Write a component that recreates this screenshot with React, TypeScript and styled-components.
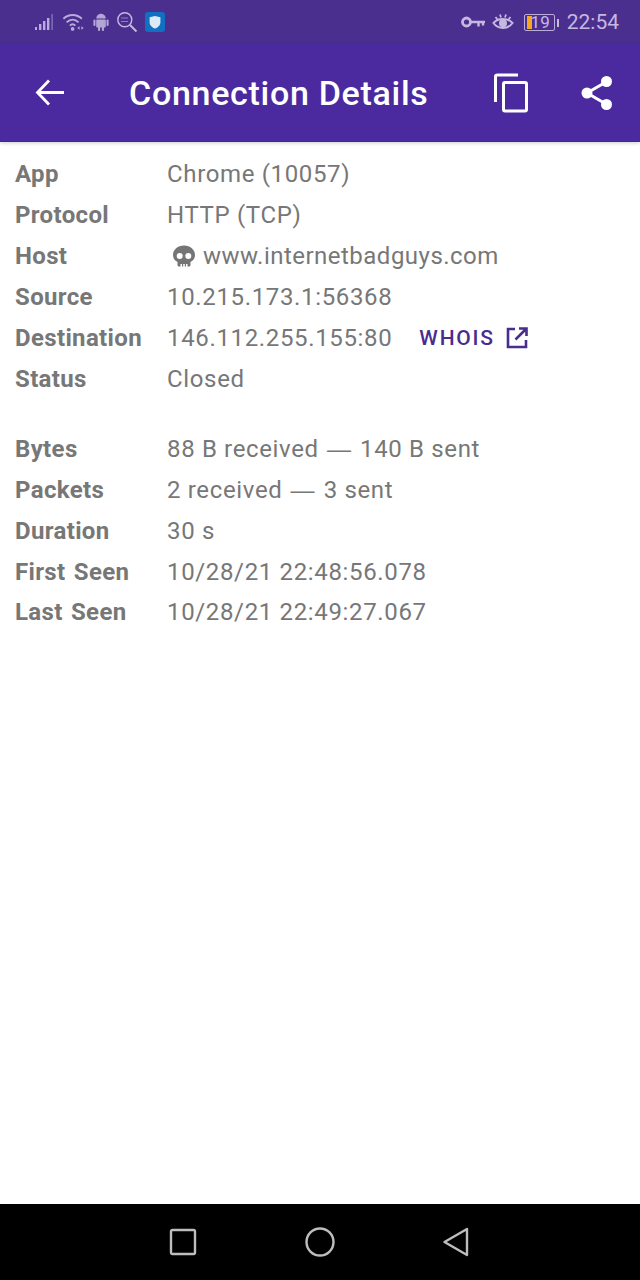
import React from "react";
import styled, { createGlobalStyle } from "styled-components";

const GlobalStyle = createGlobalStyle`
  html, body {
    margin: 0;
    padding: 0;
    background: #fff;
  }
  body {
    font-family: Roboto, "Liberation Sans", sans-serif;
  }
`;

const SignalIcon = () => (
  <svg width="20" height="20" viewBox="0 0 20 20">
    <rect x="0" y="15" width="2" height="3" fill="#b9abdc" />
    <rect x="4" y="12" width="2.4" height="6" fill="#b9abdc" />
    <rect x="8" y="9" width="2.4" height="9" fill="#b9abdc" />
    <rect x="12" y="6" width="2.4" height="12" fill="#b9abdc" />
    <rect x="16.500" y="2" width="1.2" height="16" fill="#8f7cc4" />
  </svg>
);

const WifiIcon = () => (
  <svg width="24" height="22" viewBox="0 0 26 22" fill="none">
    <path d="M1.5 7.5C7 2 16 2 21.5 7.5" stroke="#b9abdc" strokeWidth="2" />
    <path d="M5 11.5C9 7.5 14 7.5 18 11.5" stroke="#b9abdc" strokeWidth="2" />
    <path d="M8.5 15C10.5 13 12.5 13 14.5 15" stroke="#b9abdc" strokeWidth="2" />
    <circle cx="11.5" cy="18.500" r="2" fill="#b9abdc" />
    <path d="M19 15.5v4l-2.5-2zM21 15.5v4l2.5-2z" fill="#b9abdc" />
  </svg>
);

const AndroidIcon = () => (
  <svg width="16" height="20" viewBox="0 0 16 20">
    <path d="M3.2 6.6a4.8 4.8 0 0 1 9.6 0z" fill="#b3a6d6" />
    <rect x="3.2" y="7.4" width="9.6" height="8" rx="1" fill="#b3a6d6" />
    <rect x="0.4" y="7.4" width="2.1" height="6.6" rx="1" fill="#b3a6d6" />
    <rect x="13.5" y="7.4" width="2.1" height="6.6" rx="1" fill="#b3a6d6" />
    <rect x="5" y="14" width="2.1" height="5" rx="1" fill="#b3a6d6" />
    <rect x="8.9" y="14" width="2.1" height="5" rx="1" fill="#b3a6d6" />
  </svg>
);

const SearchIcon = () => (
  <svg width="22" height="22" viewBox="0 0 22 22" fill="none">
    <circle cx="8.8" cy="8.8" r="7" stroke="#c5b9e2" strokeWidth="1.4" />
    <path d="M14 14l6.5 6.5" stroke="#c5b9e2" strokeWidth="2" />
    <path d="M5 7h7M5 10.5h7" stroke="#8f7cc4" strokeWidth="1.2" />
  </svg>
);

const ShieldApp = () => (
  <svg width="20" height="20" viewBox="0 0 20 20">
    <rect width="20" height="20" rx="3" fill="#1270c0" />
    <path d="M4.6 5.2L10 4l5.4 1.2v5.2C15.4 13.4 12.6 15.6 10 16.4 7.4 15.6 4.6 13.4 4.6 10.4z" fill="#dceaf5" />
  </svg>
);

const KeyIcon = () => (
  <svg width="24" height="14" viewBox="0 0 24 14" fill="none">
    <circle cx="5.500" cy="7" r="4" stroke="#c5b9e2" strokeWidth="2.800" />
    <path d="M9 7h15M17.500 7v4.500M22 7v3.500" stroke="#c5b9e2" strokeWidth="2.400" />
  </svg>
);

const EyeIcon = () => (
  <svg width="22" height="20" viewBox="0 0 22 20" fill="none">
    <path d="M1.5 11C6 5.5 16 5.5 20.500 11C16 17.500 6 17.500 1.500 11Z" stroke="#c5b9e2" strokeWidth="2" />
    <circle cx="11" cy="11.300" r="4" fill="#c5b9e2" />
    <path d="M3.500 5l2 2.500M8 2.500l1 3M14 2.500l-1 3M18.500 5l-2 2.500" stroke="#c5b9e2" strokeWidth="1.800" />
  </svg>
);

const BackIcon = () => (
  <svg width="30" height="30" viewBox="0 0 30 30" fill="none">
    <path d="M29 14.500H3M14 2.500L2.500 14.500L14 26.500" stroke="#fff" strokeWidth="2.800" />
  </svg>
);

const CopyIcon = () => (
  <svg width="34" height="40" viewBox="0 0 34 40" fill="none">
    <path d="M24 2H3.500C2.500 2 1.500 2.500 1.500 3.500V29" stroke="#fff" strokeWidth="3" />
    <rect x="9.500" y="9.500" width="23" height="28.500" rx="1.500" stroke="#fff" strokeWidth="3" />
  </svg>
);

const ShareIcon = () => (
  <svg width="34" height="36" viewBox="0 0 34 36">
    <path d="M26 7L7 18l19 11" stroke="#fff" strokeWidth="3" fill="none" />
    <circle cx="26.500" cy="6.500" r="5.500" fill="#fff" />
    <circle cx="7" cy="18" r="5.500" fill="#fff" />
    <circle cx="26.500" cy="29.500" r="5.500" fill="#fff" />
  </svg>
);

const SkullIcon = () => (
  <svg width="24" height="24" viewBox="0 0 24 24">
    <path
      fillRule="evenodd"
      fill="#757575"
      d="M12 1.500C5.800 1.500 1 5.700 1 11c0 3.300 1.700 5.600 4.500 6.900V21c0 .9.600 1.500 1.500 1.500h1.500v-2.500h1.500v2.500h1.200v-2.500h1.600v2.500h1.200v-2.500h1.500v2.500H17c.9 0 1.500-.6 1.500-1.500v-3.100C21.300 16.600 23 14.300 23 11c0-5.300-4.800-9.500-11-9.500zM7.700 9a3 3 0 1 1 0 6 3 3 0 0 1 0-6zm8.600 0a3 3 0 1 1 0 6 3 3 0 0 1 0-6z"
    />
  </svg>
);

const ExternalIcon = () => (
  <svg width="22" height="22" viewBox="0 0 22 22" fill="none">
    <path d="M9 2H2v18h18v-7" stroke="#4a2c8f" strokeWidth="2.600" />
    <path d="M13 1.500h7.500V9M20 2L9.500 12.500" stroke="#4a2c8f" strokeWidth="2.600" />
  </svg>
);

const App: React.FC = () => {
  return (
    <Screen>
      <GlobalStyle />
      <StatusBar>
        <StatusGroup>
          <SignalIcon />
          <WifiIcon />
          <AndroidIcon />
          <SearchIcon />
          <ShieldApp />
        </StatusGroup>
        <StatusGroup>
          <KeyIcon />
          <EyeIcon />
          <Battery>
            <BatteryFill />
            19
          </Battery>
          <Clock>22:54</Clock>
        </StatusGroup>
      </StatusBar>
      <AppBar>
        <BackIcon />
        <Title>Connection Details</Title>
        <Actions>
          <CopyIcon />
          <ShareIcon />
        </Actions>
      </AppBar>
      <Content>
        <Table>
          <Label>App</Label>
          <Value>Chrome (10057)</Value>
          <Label>Protocol</Label>
          <Value>HTTP (TCP)</Value>
          <Label>Host</Label>
          <Value>
            <HostIcon>
              <SkullIcon />
            </HostIcon>
            <HostName>www.internetbadguys.com</HostName>
          </Value>
          <Label>Source</Label>
          <Value>10.215.173.1:56368</Value>
          <Label>Destination</Label>
          <Value>
            146.112.255.155:80
            <Whois>
              WHOIS
              <ExternalIcon />
            </Whois>
          </Value>
          <Label>Status</Label>
          <Value>Closed</Value>
        </Table>
        <Table>
          <Label>Bytes</Label>
          <Value>
            88 B received <Dash>—</Dash> 140 B sent
          </Value>
          <Label>Packets</Label>
          <Value>
            2 received <Dash>—</Dash> 3 sent
          </Value>
          <Label>Duration</Label>
          <Value>30 s</Value>
          <Label>First Seen</Label>
          <Value>10/28/21 22:48:56.078</Value>
          <Label>Last Seen</Label>
          <Value>10/28/21 22:49:27.067</Value>
        </Table>
      </Content>
      <NavBar>
        <svg width="28" height="28" viewBox="0 0 28 28" fill="none">
          <rect x="2" y="2" width="24" height="24" rx="1.500" stroke="#bdbdbd" strokeWidth="2.400" />
        </svg>
        <svg width="30" height="30" viewBox="0 0 30 30" fill="none">
          <circle cx="15" cy="15" r="13.500" stroke="#bdbdbd" strokeWidth="2.400" />
        </svg>
        <svg width="28" height="30" viewBox="0 0 28 30" fill="none">
          <path d="M24 2L1.500 15L24 28z" stroke="#bdbdbd" strokeWidth="2.400" strokeLinejoin="round" />
        </svg>
      </NavBar>
    </Screen>
  );
};

export default App;

const Screen = styled.div`
  width: 640px;
  height: 1280px;
  display: flex;
  flex-direction: column;
  background: #fff;
  overflow: hidden;
`;

const StatusBar = styled.div`
  height: 44px;
  flex: none;
  display: flex;
  align-items: center;
  justify-content: space-between;
  padding: 0 21px 0 35px;
  background: #4b2f8e;
`;

const StatusGroup = styled.div`
  display: flex;
  align-items: center;
  gap: 7px;
`;

const Battery = styled.div`
  position: relative;
  width: 31px;
  height: 17px;
  margin: 0 3px;
  border: 1px solid #b9abdc;
  border-radius: 2px;
  color: #c5b9e2;
  font-size: 17px;
  line-height: 15px;
  text-align: right;
  padding-right: 4px;
  box-sizing: border-box;

  &::after {
    content: "";
    position: absolute;
    right: -5px;
    top: 4px;
    width: 2px;
    height: 8px;
    background: #c5b9e2;
  }
`;

const BatteryFill = styled.span`
  position: absolute;
  left: 2px;
  top: 1px;
  width: 5px;
  height: 13px;
  background: #f5a623;
`;

const Clock = styled.span`
  margin-left: 2px;
  color: #c5b9e2;
  font-size: 21px;
`;

const AppBar = styled.div`
  height: 98px;
  flex: none;
  display: flex;
  align-items: center;
  padding: 1px 26px 0 35px;
  box-sizing: border-box;
  background: #4b2aa0;
  border-bottom: 1px solid #432695;
  box-shadow: 0 1px 4px rgba(0, 0, 0, 0.2);
  position: relative;
`;

const Title = styled.h1`
  margin: 0 0 0 64px;
  flex: 1;
  color: #fff;
  font-size: 34px;
  font-weight: 500;
  letter-spacing: 0.7px;
`;

const Actions = styled.div`
  display: flex;
  align-items: center;
  gap: 52px;
`;

const Content = styled.div`
  flex: 1;
  display: flex;
  flex-direction: column;
  gap: 29.500px;
  padding: 12px 0 0 15px;
`;

const Table = styled.div`
  display: grid;
  grid-template-columns: 152px 1fr;
  grid-auto-rows: 40.850px;
  align-items: center;
`;

const Label = styled.div`
  color: #777;
  font-size: 24px;
  font-weight: 700;
  letter-spacing: 0.35px;
  word-spacing: 2px;
  white-space: nowrap;
`;

const Value = styled.div`
  color: #777;
  font-size: 24px;
  letter-spacing: 0.65px;
  white-space: nowrap;
`;

const Dash = styled.span`
  font-family: "Liberation Sans", sans-serif;
  letter-spacing: 2.500px;
  margin-left: 1.500px;
`;

const HostIcon = styled.span`
  display: inline-block;
  height: 24px;
  margin: 0 7px 0 5px;
  vertical-align: -4px;

  svg {
    display: block;
  }
`;

const HostName = styled.span`
  letter-spacing: 0.480px;
`;

const Whois = styled.span`
  display: inline-flex;
  align-items: center;
  gap: 11px;
  margin-left: 27px;
  vertical-align: 1px;
  color: #4a2c8f;
  font-size: 21px;
  font-weight: 500;
  letter-spacing: 1.800px;
`;

const NavBar = styled.div`
  height: 76px;
  flex: none;
  display: flex;
  align-items: center;
  justify-content: center;
  gap: 108px;
  background: #000;
`;
